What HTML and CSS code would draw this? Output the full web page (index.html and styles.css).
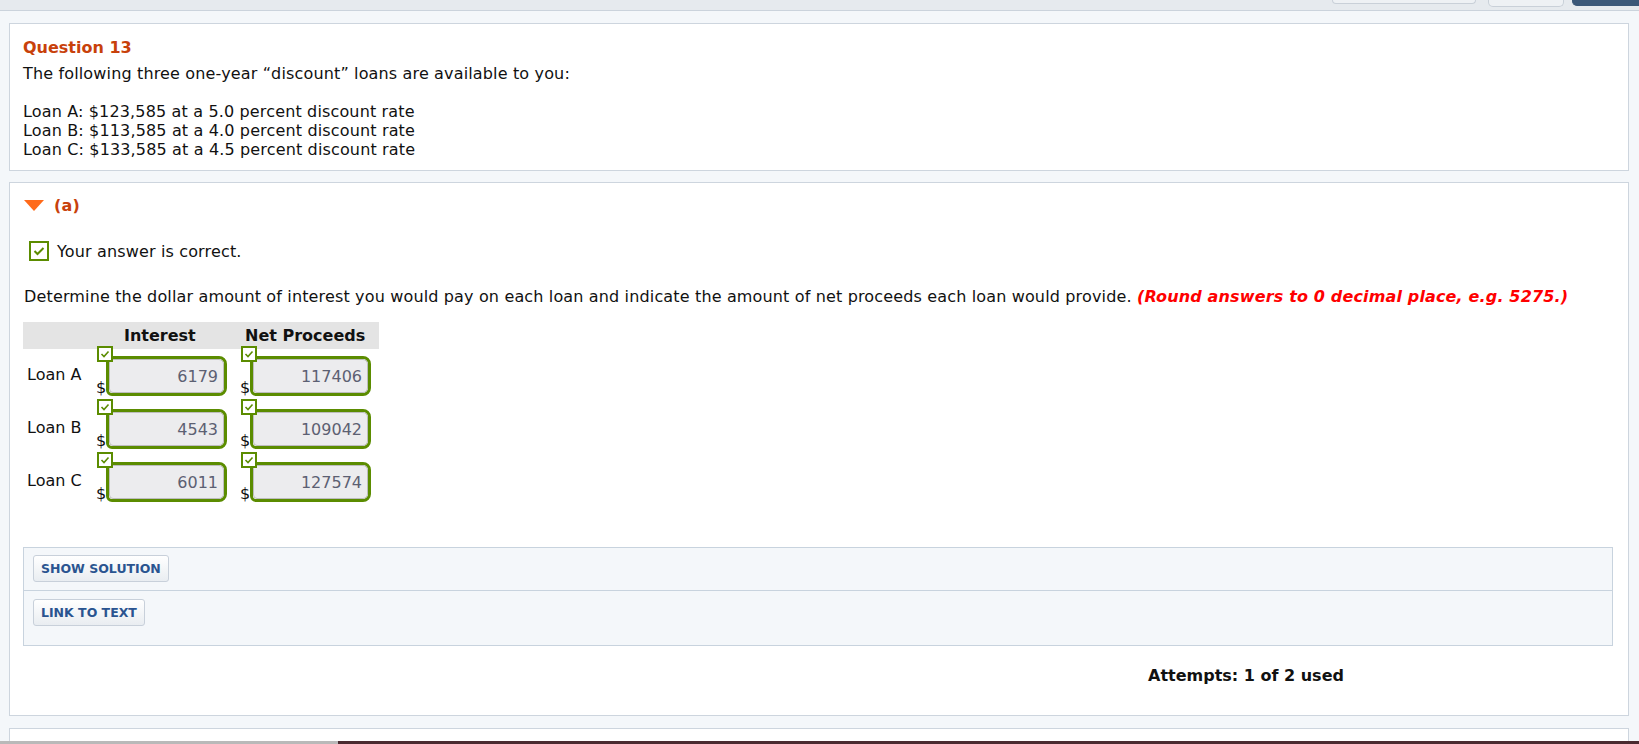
FILE: index.html
```html
<!DOCTYPE html>
<html>
    <head>
        <title>Question 13</title>
        <link rel="stylesheet" href="styles.css">
    </head>

    <body>
        <div class="top_bar">
            <div class="top_button top_button1"></div>
            <div class="top_button top_button2"></div>
            <div class="top_button top_button3"></div>
        </div>

        <div class="panel question_panel">
            <div class="question_title">Question 13</div>
            <div>The following three one-year &ldquo;discount&rdquo; loans are available to you:</div>
            <div class="blank_line"></div>
            <div>Loan A: $123,585 at a 5.0 percent discount rate</div>
            <div>Loan B: $113,585 at a 4.0 percent discount rate</div>
            <div>Loan C: $133,585 at a 4.5 percent discount rate</div>
        </div>

        <div class="panel part_panel">
            <div class="part_header">
                <div class="triangle"></div>
                <span class="part_label">(a)</span>
            </div>

            <div class="answer_status">
                <span class="check_big">
                    <svg width="12" height="10" viewBox="0 0 12 10"><polyline points="1.5,5 4.5,8 10.5,2" fill="none" stroke="#5b8c00" stroke-width="2"/></svg>
                </span>
                <span>Your answer is correct.</span>
            </div>

            <div class="instructions">Determine the dollar amount of interest you would pay on each loan and indicate the amount of net proceeds each loan would provide. <span class="round_note">(Round answers to 0 decimal place, e.g. 5275.)</span></div>

            <table class="loan_table">
                <tr class="head_row">
                    <th class="col_label"></th>
                    <th class="col_interest">Interest</th>
                    <th class="col_net">Net Proceeds</th>
                </tr>
                <tr>
                    <td class="loan_label">Loan A</td>
                    <td><div class="cell"><span class="check_small"><svg width="10" height="8" viewBox="0 0 10 8"><polyline points="1.5,4 4,6.5 8.5,1.5" fill="none" stroke="#5b8c00" stroke-width="1.6"/></svg></span><span class="dollar">$</span><div class="field_outer"><div class="field">6179</div></div></div></td>
                    <td><div class="cell"><span class="check_small"><svg width="10" height="8" viewBox="0 0 10 8"><polyline points="1.5,4 4,6.5 8.5,1.5" fill="none" stroke="#5b8c00" stroke-width="1.6"/></svg></span><span class="dollar">$</span><div class="field_outer"><div class="field">117406</div></div></div></td>
                </tr>
                <tr>
                    <td class="loan_label">Loan B</td>
                    <td><div class="cell"><span class="check_small"><svg width="10" height="8" viewBox="0 0 10 8"><polyline points="1.5,4 4,6.5 8.5,1.5" fill="none" stroke="#5b8c00" stroke-width="1.6"/></svg></span><span class="dollar">$</span><div class="field_outer"><div class="field">4543</div></div></div></td>
                    <td><div class="cell"><span class="check_small"><svg width="10" height="8" viewBox="0 0 10 8"><polyline points="1.5,4 4,6.5 8.5,1.5" fill="none" stroke="#5b8c00" stroke-width="1.6"/></svg></span><span class="dollar">$</span><div class="field_outer"><div class="field">109042</div></div></div></td>
                </tr>
                <tr>
                    <td class="loan_label">Loan C</td>
                    <td><div class="cell"><span class="check_small"><svg width="10" height="8" viewBox="0 0 10 8"><polyline points="1.5,4 4,6.5 8.5,1.5" fill="none" stroke="#5b8c00" stroke-width="1.6"/></svg></span><span class="dollar">$</span><div class="field_outer"><div class="field">6011</div></div></div></td>
                    <td><div class="cell"><span class="check_small"><svg width="10" height="8" viewBox="0 0 10 8"><polyline points="1.5,4 4,6.5 8.5,1.5" fill="none" stroke="#5b8c00" stroke-width="1.6"/></svg></span><span class="dollar">$</span><div class="field_outer"><div class="field">127574</div></div></div></td>
                </tr>
            </table>

            <div class="solution_box">
                <div class="solution_row first_row">
                    <span class="small_button">SHOW SOLUTION</span>
                </div>
                <div class="solution_row last_row">
                    <span class="small_button">LINK TO TEXT</span>
                </div>
            </div>

            <div class="attempts">Attempts: 1 of 2 used</div>
        </div>

        <div class="panel next_panel"></div>

        <div class="bottom_bar">
            <div class="bottom_left"></div>
            <div class="bottom_right"></div>
        </div>
    </body>
</html>
```

FILE: styles.css
```css
html, body
{
    margin:0;
    padding:0;
}

body
{
    background-color:#f4f7fa;
    font-family:"DejaVu Sans", Verdana, sans-serif;
    font-size:16px;
    line-height:19px;
    letter-spacing:0.15px;
    color:#111111;
    height:744px;
    overflow:hidden;
}

.top_bar
{
    height:10px;
    background-color:#e6eaee;
    border-bottom:1px solid #cbd3dc;
    display:flex;
    justify-content:flex-end;
    align-items:flex-start;
}

.top_button
{
    box-sizing:border-box;
    border:1px solid #c9d0d8;
    border-top:none;
    border-radius:0 0 5px 5px;
    background-color:#eef1f4;
}

.top_button1
{
    width:144px;
    height:4px;
    margin-right:12px;
}

.top_button2
{
    width:76px;
    height:7px;
    margin-right:8px;
}

.top_button3
{
    width:67px;
    height:6px;
    background-color:#3b5878;
    border-color:#3b5878;
    border-radius:0 0 0 5px;
}

.panel
{
    background-color:#ffffff;
    border:1px solid #cdd5de;
    margin:0 10px 0 9px;
}

.question_panel
{
    margin-top:12px;
    padding:14px 14px 11px 13px;
}

.question_title
{
    color:#c8410b;
    font-weight:bold;
    letter-spacing:0px;
    margin-bottom:7px;
}

.blank_line
{
    height:19px;
}

.part_panel
{
    margin-top:11px;
    padding:13px 15px 30px 13px;
}

.part_header
{
    display:flex;
    align-items:center;
    height:19px;
}

.triangle
{
    width:0px;
    height:0px;
    border-left:10px solid transparent;
    border-right:10px solid transparent;
    border-top:11px solid #ff6a1a;
    margin-left:1px;
    margin-right:10px;
}

.part_label
{
    color:#c8410b;
    font-weight:bold;
}

.answer_status
{
    display:flex;
    align-items:center;
    margin-top:26px;
    margin-left:6px;
    height:20px;
}

.check_big
{
    box-sizing:border-box;
    width:20px;
    height:20px;
    border:2px solid #5b8c00;
    display:flex;
    align-items:center;
    justify-content:center;
    margin-right:8px;
}

.check_big svg
{
    display:block;
}

.instructions
{
    margin-top:26px;
    margin-left:1px;
}

.round_note
{
    color:#ff0000;
    font-weight:bold;
    font-style:italic;
}

.loan_table
{
    border-collapse:collapse;
    margin-top:16px;
    letter-spacing:0px;
}

.loan_table td, .loan_table th
{
    padding:0;
}

.head_row th
{
    background-color:#e4e4e4;
    height:27px;
    text-align:left;
    font-weight:bold;
}

.col_label
{
    width:73px;
}

.col_interest
{
    width:144px;
    padding-left:28px !important;
    box-sizing:border-box;
}

.col_net
{
    width:139px;
    padding-left:5px !important;
    box-sizing:border-box;
}

.loan_label
{
    vertical-align:middle;
    padding-left:4px !important;
    padding-bottom:2px !important;
}

.cell
{
    position:relative;
    display:flex;
    align-items:flex-end;
    padding:7px 0 6px 0;
}

.dollar
{
    width:10px;
    line-height:16px;
}

.check_small
{
    position:absolute;
    left:1px;
    top:-3px;
    box-sizing:border-box;
    width:16px;
    height:16px;
    border:2px solid #5b8c00;
    background-color:#ffffff;
    display:flex;
    align-items:center;
    justify-content:center;
    z-index:2;
}

.check_small svg
{
    display:block;
}

.field_outer
{
    box-sizing:border-box;
    width:121px;
    height:40px;
    border:3px solid #5b8c00;
    border-radius:3px 8px 8px 6px;
}

.field
{
    box-sizing:border-box;
    height:34px;
    background-color:#ececee;
    border:1px solid #bdbdbd;
    border-radius:2px 5px 5px 4px;
    text-align:right;
    padding-right:5px;
    padding-top:2px;
    line-height:30px;
    color:#5c6072;
}

.solution_box
{
    margin-top:39px;
    background-color:#f4f7fa;
    border:1px solid #c8d3de;
    letter-spacing:0px;
}

.solution_row
{
    padding-left:9px;
}

.first_row
{
    padding-top:7px;
    height:35px;
    border-bottom:1px solid #c8d3de;
}

.last_row
{
    padding-top:8px;
    height:46px;
}

.small_button
{
    display:inline-block;
    box-sizing:border-box;
    height:27px;
    line-height:25px;
    padding:0 7px 0 7px;
    border:1px solid #c8d0da;
    border-radius:3px;
    background:linear-gradient(#ffffff, #e9edf1);
    color:#2a5490;
    font-size:12.5px;
    font-weight:bold;
}

.attempts
{
    margin-top:20px;
    padding-left:1125px;
    font-weight:bold;
    letter-spacing:0px;
}

.next_panel
{
    margin-top:12px;
    height:12px;
    border-bottom:none;
}

.bottom_bar
{
    display:flex;
    height:3px;
}

.bottom_left
{
    width:338px;
    background-color:#b9b9b9;
}

.bottom_right
{
    flex:1;
    background-color:#4a2a30;
}
```
